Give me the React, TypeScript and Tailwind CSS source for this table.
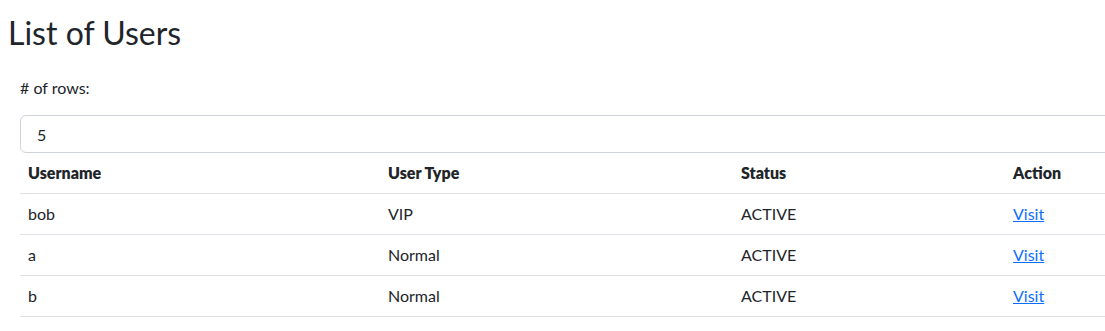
import { useState } from "react";

type User = {
  username: string;
  userType: string;
  status: string;
};

const users: User[] = [
  { username: "bob", userType: "VIP", status: "ACTIVE" },
  { username: "a", userType: "Normal", status: "ACTIVE" },
  { username: "b", userType: "Normal", status: "ACTIVE" },
];

export default function App() {
  const [rows, setRows] = useState("5");

  return (
    <div className="w-screen overflow-hidden bg-white text-[#212529] font-['Lato',sans-serif]">
      <div className="w-[1160px] pt-[14px] pl-2">
        <h1 className="text-[32px] leading-[1.2] font-normal">List of Users</h1>
        <div className="pl-3 mt-[24px]">
          <label className="block text-base leading-6">
            # of rows:
          </label>
          <input
            value={rows}
            onChange={(e) => setRows(e.target.value)}
            className="mt-[15px] block h-[38px] w-full rounded-[6px] border border-[#ced4da] px-4 text-base outline-none"
          />
          <table className="w-full border-collapse text-left text-base">
            <thead>
              <tr className="border-b border-[#dee2e6]">
                <th className="w-[360px] px-2 py-2 leading-6 font-extrabold">Username</th>
                <th className="w-[353px] px-2 py-2 leading-6 font-extrabold">User Type</th>
                <th className="w-[272px] px-2 py-2 leading-6 font-extrabold">Status</th>
                <th className="px-2 py-2 leading-6 font-extrabold">Action</th>
              </tr>
            </thead>
            <tbody>
              {users.map((u) => (
                <tr key={u.username} className="border-b border-[#dee2e6]">
                  <td className="px-2 py-2 leading-6">{u.username}</td>
                  <td className="px-2 py-2 leading-6">{u.userType}</td>
                  <td className="px-2 py-2 leading-6">{u.status}</td>
                  <td className="px-2 py-2 leading-6">
                    <a href="#" className="text-[#0d6efd] underline">
                      Visit
                    </a>
                  </td>
                </tr>
              ))}
            </tbody>
          </table>
        </div>
      </div>
    </div>
  );
}
